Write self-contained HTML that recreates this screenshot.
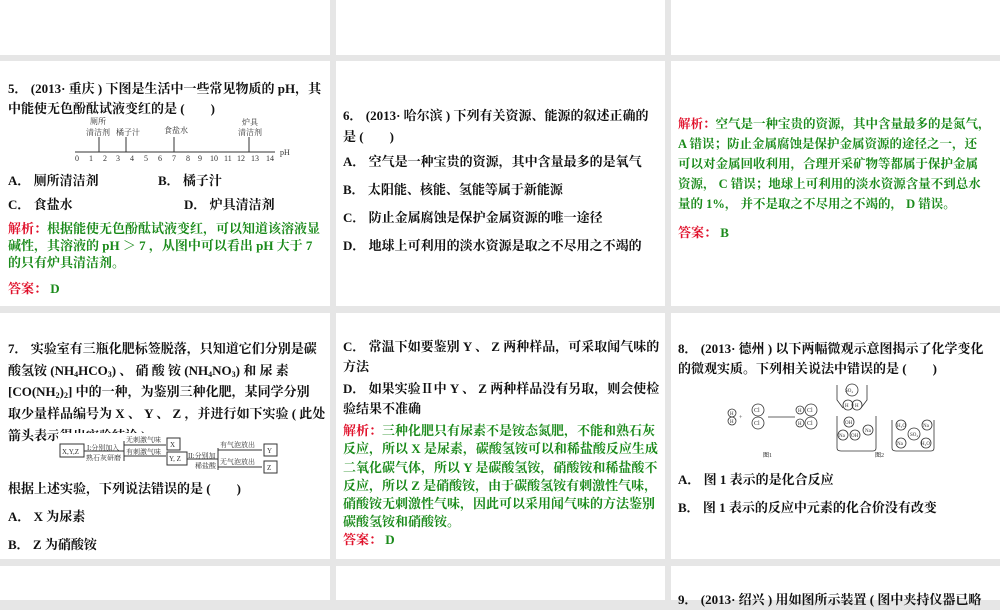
<html><head><style>
body{margin:0;width:1000px;height:600px;background:#e6e6e6;position:relative;overflow:hidden;font-family:"Liberation Serif","Noto Serif CJK SC",serif;font-size:13px;color:#111;}
.p{position:absolute;background:#fff;}
.t{position:absolute;line-height:20px;font-weight:bold;}
.g{color:#1a8a1a;font-weight:bold;}
.r{color:#e0102a;font-weight:bold;}
sub{font-size:8px;line-height:0;vertical-align:-2px;}
</style></head><body>
<div class="p" style="left:0;top:0;width:330px;height:55px"></div>
<div class="p" style="left:336px;top:0;width:329px;height:55px"></div>
<div class="p" style="left:671px;top:0;width:329px;height:55px"></div>
<div class="p" style="left:0;top:61px;width:330px;height:245px"></div>
<div class="p" style="left:336px;top:61px;width:329px;height:245px"></div>
<div class="p" style="left:671px;top:61px;width:329px;height:245px"></div>
<div class="p" style="left:0;top:313px;width:330px;height:246px"></div>
<div class="p" style="left:336px;top:313px;width:329px;height:246px"></div>
<div class="p" style="left:671px;top:313px;width:329px;height:246px"></div>
<div class="p" style="left:0;top:566px;width:330px;height:34px"></div>
<div class="p" style="left:336px;top:566px;width:329px;height:34px"></div>
<div class="p" style="left:671px;top:566px;width:329px;height:34px"></div>

<!-- Q5 -->
<div class="t" style="left:8px;top:79px;width:318px">5． (2013· 重庆 ) 下图是生活中一些常见物质的 pH，其中能使无色酚酞试液变红的是 (　　)</div>
<svg style="position:absolute;left:70px;top:115px" width="230" height="50">
<g font-size="8" fill="#333" font-family="Liberation Serif,Noto Serif CJK SC">
<text x="20" y="9">厕所</text><text x="16" y="20">清洁剂</text><text x="46" y="20">橘子汁</text><text x="94" y="18">食盐水</text><text x="172" y="10">炉具</text><text x="168" y="20">清洁剂</text>
<line x1="5" y1="37" x2="205" y2="37" stroke="#333"/>
<line x1="29" y1="22" x2="29" y2="37" stroke="#333"/><line x1="56" y1="22" x2="56" y2="37" stroke="#333"/><line x1="104" y1="22" x2="104" y2="37" stroke="#333"/><line x1="179" y1="22" x2="179" y2="37" stroke="#333"/>
<text x="5" y="46">0</text><text x="19" y="46">1</text><text x="33" y="46">2</text><text x="46" y="46">3</text><text x="60" y="46">4</text><text x="74" y="46">5</text><text x="88" y="46">6</text><text x="102" y="46">7</text><text x="116" y="46">8</text><text x="128" y="46">9</text><text x="140" y="46">10</text><text x="154" y="46">11</text><text x="167" y="46">12</text><text x="181" y="46">13</text><text x="196" y="46">14</text><text x="210" y="40">pH</text>
</g></svg>
<div class="t" style="left:8px;top:171px">A． 厕所清洁剂</div>
<div class="t" style="left:158px;top:171px">B． 橘子汁</div>
<div class="t" style="left:8px;top:195px">C． 食盐水</div>
<div class="t" style="left:184px;top:195px">D． 炉具清洁剂</div>
<div class="t g" style="left:8px;top:220px;width:322px;line-height:17px;font-size:13px;white-space:nowrap"><span class="r">解析：</span>根据能使无色酚酞试液变红，可以知道该溶液显<br>碱性，其溶液的 pH ＞ 7 ，从图中可以看出 pH 大于 7<br>的只有炉具清洁剂。</div>
<div class="t g" style="left:8px;top:279px"><span class="r">答案：</span> D</div>

<!-- Q6 -->
<div class="t" style="left:343px;top:105px;width:318px;line-height:21px">6． (2013· 哈尔滨 ) 下列有关资源、能源的叙述正确的是 (　　)</div>
<div class="t" style="left:343px;top:152px">A． 空气是一种宝贵的资源，其中含量最多的是氧气</div>
<div class="t" style="left:343px;top:180px">B． 太阳能、核能、氢能等属于新能源</div>
<div class="t" style="left:343px;top:208px">C． 防止金属腐蚀是保护金属资源的唯一途径</div>
<div class="t" style="left:343px;top:236px">D． 地球上可利用的淡水资源是取之不尽用之不竭的</div>

<div class="t g" style="left:678px;top:114px;width:322px;line-height:20px;font-size:12.5px;white-space:nowrap"><span class="r">解析：</span>空气是一种宝贵的资源，其中含量最多的是氮气，<br>A 错误；防止金属腐蚀是保护金属资源的途径之一，还<br>可以对金属回收利用，合理开采矿物等都属于保护金属<br>资源， C 错误；地球上可利用的淡水资源含量不到总水<br>量的 1%， 并不是取之不尽用之不竭的， D 错误。</div>
<div class="t g" style="left:678px;top:223px"><span class="r">答案：</span> B</div>

<!-- Q7 -->
<div class="t" style="left:8px;top:338px;width:324px;line-height:21.7px;white-space:nowrap">7． 实验室有三瓶化肥标签脱落，只知道它们分别是碳<br>酸氢铵 (NH<sub>4</sub>HCO<sub>3</sub>) 、 硝 酸 铵 (NH<sub>4</sub>NO<sub>3</sub>) 和 尿 素<br>[CO(NH<sub>2</sub>)<sub>2</sub>] 中的一种，为鉴别三种化肥，某同学分别<br>取少量样品编号为 X 、 Y 、 Z ，并进行如下实验 ( 此处<br>箭头表示得出实验结论 )</div>
<svg style="position:absolute;left:58px;top:433px;background:#fff" width="222" height="42">
<g font-size="7" fill="#333" stroke="none" font-family="Liberation Serif,Noto Serif CJK SC">
<rect x="2" y="11" width="24" height="13" fill="none" stroke="#333"/><text x="4" y="21">X,Y,Z</text>
<text x="29" y="17">I:分别加入</text><text x="28" y="27">熟石灰研磨</text>
<line x1="26" y1="18" x2="66" y2="18" stroke="#333"/>
<line x1="66" y1="8" x2="66" y2="28" stroke="#333"/>
<line x1="66" y1="12" x2="108" y2="12" stroke="#333"/><text x="68" y="9">无刺激气味</text>
<rect x="109" y="5" width="13" height="12" fill="none" stroke="#333"/><text x="112" y="14">X</text>
<line x1="66" y1="23" x2="108" y2="23" stroke="#333"/><text x="68" y="21">有刺激气味</text>
<rect x="109" y="19" width="20" height="13" fill="none" stroke="#333"/><text x="111" y="28">Y, Z</text>
<text x="130" y="25">II:分别加</text><text x="137" y="35">稀盐酸</text>
<line x1="129" y1="26" x2="160" y2="26" stroke="#333"/><line x1="160" y1="15" x2="160" y2="37" stroke="#333"/>
<line x1="160" y1="17" x2="204" y2="17" stroke="#333"/><text x="162" y="14">有气泡放出</text>
<rect x="206" y="11" width="13" height="12" fill="none" stroke="#333"/><text x="209" y="20">Y</text>
<line x1="160" y1="34" x2="204" y2="34" stroke="#333"/><text x="162" y="31">无气泡放出</text>
<rect x="206" y="28" width="13" height="12" fill="none" stroke="#333"/><text x="209" y="37">Z</text>
</g></svg>
<div class="t" style="left:8px;top:479px">根据上述实验，下列说法错误的是 (　　)</div>
<div class="t" style="left:8px;top:507px">A． X 为尿素</div>
<div class="t" style="left:8px;top:535px">B． Z 为硝酸铵</div>

<!-- middle row3 -->
<div class="t" style="left:343px;top:337px;width:318px">C． 常温下如要鉴别 Y 、 Z 两种样品，可采取闻气味的方法</div>
<div class="t" style="left:343px;top:379px;width:318px">D． 如果实验Ⅱ中 Y 、 Z 两种样品没有另取，则会使检验结果不准确</div>
<div class="t g" style="left:343px;top:422px;width:322px;line-height:18.3px;font-size:13px;white-space:nowrap"><span class="r">解析：</span>三种化肥只有尿素不是铵态氮肥，不能和熟石灰<br>反应，所以 X 是尿素，碳酸氢铵可以和稀盐酸反应生成<br>二氧化碳气体，所以 Y 是碳酸氢铵，硝酸铵和稀盐酸不<br>反应，所以 Z 是硝酸铵，由于碳酸氢铵有刺激性气味，<br>硝酸铵无刺激性气味，因此可以采用闻气味的方法鉴别<br>碳酸氢铵和硝酸铵。</div>
<div class="t g" style="left:343px;top:530px"><span class="r">答案：</span> D</div>

<!-- Q8 -->
<div class="t" style="left:678px;top:339px;width:322px;line-height:20px;white-space:nowrap">8． (2013· 德州 ) 以下两幅微观示意图揭示了化学变化<br>的微观实质。下列相关说法中错误的是 (　　)</div>
<svg style="position:absolute;left:725px;top:380px" width="215" height="82" font-family="Liberation Serif" font-size="6" fill="#333">
<g fill="none" stroke="#333" stroke-width="0.8">
<circle cx="7" cy="33" r="4"/><circle cx="7" cy="41" r="4"/><circle cx="33" cy="30" r="6"/><circle cx="33" cy="43" r="6"/>
<line x1="43" y1="37" x2="70" y2="37"/><circle cx="75" cy="30" r="4"/><circle cx="86" cy="30" r="6"/><circle cx="75" cy="43" r="4"/><circle cx="86" cy="43" r="6"/>
<path d="M112 5 V20 L118 28 M142 5 V20 L136 28 M112 36 V68 Q112 71 116 71 H148 Q151 71 151 68 V36"/>
<circle cx="127" cy="10" r="6"/><circle cx="123" cy="25" r="5"/><circle cx="132" cy="25" r="5"/>
<circle cx="124" cy="42" r="5"/><circle cx="118" cy="55" r="5"/><circle cx="130" cy="55" r="5"/><circle cx="143" cy="50" r="5"/>
<path d="M167 40 V68 Q167 71 171 71 H206 Q209 71 209 68 V40"/>
<circle cx="176" cy="45" r="5"/><circle cx="202" cy="45" r="5"/><circle cx="189" cy="54" r="6"/><circle cx="176" cy="63" r="5"/><circle cx="201" cy="63" r="5"/>
</g>
<text x="5" y="35" font-size="5">H</text><text x="5" y="43" font-size="5">H</text><text x="14" y="39">+</text><text x="29" y="32">Cl</text><text x="29" y="45">Cl</text>
<text x="73" y="32" font-size="5">H</text><text x="82" y="32">Cl</text><text x="73" y="45" font-size="5">H</text><text x="82" y="45">Cl</text>
<text x="120" y="12" font-size="5">SO₄</text><text x="120" y="27" font-size="5">H</text><text x="130" y="27" font-size="5">H</text><text x="120" y="44" font-size="5">OH</text>
<text x="114" y="57" font-size="5">Na</text><text x="126" y="57" font-size="5">OH</text><text x="140" y="52" font-size="5">Na</text>
<text x="172" y="47" font-size="5">H₂O</text><text x="198" y="47" font-size="5">Na</text><text x="185" y="56" font-size="5">SO₄</text><text x="172" y="65" font-size="5">Na</text><text x="196" y="65" font-size="5">H₂O</text>
<text x="38" y="77">图1</text><text x="150" y="77">图2</text>
</svg>
<div class="t" style="left:678px;top:470px">A． 图 1 表示的是化合反应</div>
<div class="t" style="left:678px;top:498px">B． 图 1 表示的反应中元素的化合价没有改变</div>
<div class="t" style="left:678px;top:590px;white-space:nowrap">9． (2013· 绍兴 ) 用如图所示装置 ( 图中夹持仪器已略</div>
</body></html>
